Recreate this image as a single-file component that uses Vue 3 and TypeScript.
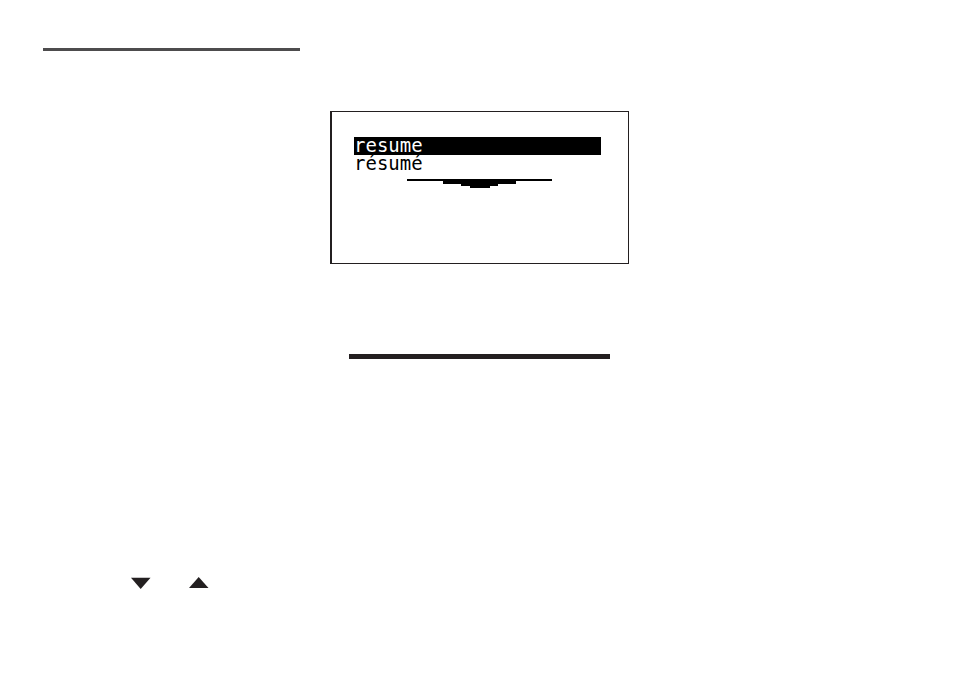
<script setup lang="ts">
import { ref } from 'vue'

const words: string[] = ['resume', 'résumé']
const selected = ref<number>(0)

function move(step: number): void {
  selected.value = Math.min(words.length - 1, Math.max(0, selected.value + step))
}
</script>

<template>
  <main class="page">
    <hr class="heading-rule" />

    <section class="display" aria-label="Word list">
      <ul class="words">
        <li v-for="(word, index) in words" :key="word">
          <button
            type="button"
            class="word"
            :class="{ selected: index === selected }"
            :aria-pressed="index === selected"
            @click="selected = index"
          >{{ word }}</button>
        </li>
      </ul>
      <svg class="more" viewBox="0 0 145 9" shape-rendering="crispEdges" aria-hidden="true">
        <path d="M0 0H145V2H109V5H91V7H83V9H63V7H54V5H36V2H0Z" />
      </svg>
    </section>

    <hr class="section-rule" />

    <nav class="keys" aria-label="Selection">
      <button type="button" class="key" aria-label="Down" @click="move(1)">
        <svg viewBox="0 0 20 12" aria-hidden="true"><path d="M0 0.7H19.5L9.7 12Z" /></svg>
      </button>
      <button type="button" class="key" aria-label="Up" @click="move(-1)">
        <svg viewBox="0 0 20 12" aria-hidden="true"><path d="M0 11H19.5L9.7 0Z" /></svg>
      </button>
    </nav>
  </main>
</template>

<style>
body {
  background: #ffffff;
}
</style>

<style scoped>
.page {
  display: flex;
  flex-direction: column;
  align-items: center;
  padding: 48px 38px 92px 43px;
}

hr {
  margin: 0;
  border: 0;
}

.heading-rule {
  align-self: flex-start;
  width: 257px;
  max-width: 100%;
  height: 3px;
  background: #4d4c4d;
}

.display {
  box-sizing: border-box;
  display: flex;
  flex-direction: column;
  align-items: center;
  width: 299px;
  max-width: 100%;
  min-height: 153px;
  margin-top: 60px;
  padding: 25px 23px 24px 22px;
  border: 1px solid #231f20;
  border-left-width: 2px;
}

.words {
  box-sizing: border-box;
  width: 100%;
  margin: 0;
  padding: 0 4px 0 0;
  list-style: none;
}

.word {
  display: block;
  width: 100%;
  height: 18px;
  padding: 0 0 2px;
  border: 0;
  background: #ffffff;
  color: #000000;
  font: 400 19px/16px "DejaVu Sans Mono", monospace;
  text-align: left;
}

.word.selected {
  background: #000000;
  color: #ffffff;
}

.more {
  display: block;
  width: 145px;
  height: 9px;
  margin-top: 6px;
}

.section-rule {
  width: 261px;
  max-width: 100%;
  height: 5px;
  margin-top: 90px;
  background: #231f20;
}

.keys {
  display: flex;
  align-self: flex-start;
  gap: 38px;
  margin-top: 218px;
  padding-left: 88px;
}

.key {
  display: block;
  padding: 0;
  border: 0;
  background: none;
}

.key svg {
  display: block;
  width: 20px;
  height: 12px;
  fill: #231f20;
}
</style>
